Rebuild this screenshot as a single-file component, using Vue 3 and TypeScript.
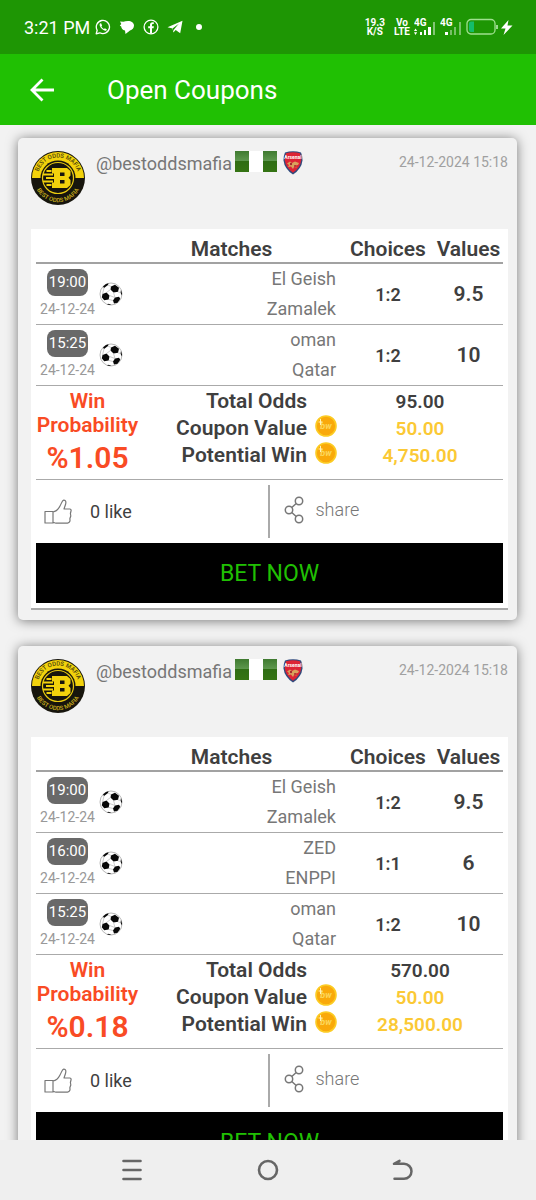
<script setup lang="ts">
interface Match {
  time: string
  date: string
  home: string
  away: string
  choice: string
  value: string
}

interface Coupon {
  id: number
  user: string
  createdAt: string
  matches: Match[]
  probability: string
  totalOdds: string
  couponValue: string
  potentialWin: string
  likes: number
}

const elGeish: Match = { time: '19:00', date: '24-12-24', home: 'El Geish', away: 'Zamalek', choice: '1:2', value: '9.5' }
const zed: Match = { time: '16:00', date: '24-12-24', home: 'ZED', away: 'ENPPI', choice: '1:1', value: '6' }
const oman: Match = { time: '15:25', date: '24-12-24', home: 'oman', away: 'Qatar', choice: '1:2', value: '10' }

const coupons: Coupon[] = [
  {
    id: 1,
    user: '@bestoddsmafia',
    createdAt: '24-12-2024 15:18',
    matches: [elGeish, oman],
    probability: '%1.05',
    totalOdds: '95.00',
    couponValue: '50.00',
    potentialWin: '4,750.00',
    likes: 0,
  },
  {
    id: 2,
    user: '@bestoddsmafia',
    createdAt: '24-12-2024 15:18',
    matches: [elGeish, zed, oman],
    probability: '%0.18',
    totalOdds: '570.00',
    couponValue: '50.00',
    potentialWin: '28,500.00',
    likes: 0,
  },
]
</script>

<template>
  <div class="screen">
    <div class="status">
      <span class="clock">3:21 PM</span>
      <div class="notices">
        <svg viewBox="0 0 16 16" width="16" height="16" aria-hidden="true">
          <path d="M1.2 14.8l1-3.5A6.6 6.6 0 1 1 4.8 13.800z" fill="none" stroke="#fff" stroke-width="1.3" stroke-linejoin="round" />
          <path d="M5.4 4.3c-.9.6-1 1.800-.4 2.900 1 2 2.500 3.500 4.400 4.300 1.200.4 2.200 0 2.500-1.100l-2-1.100-.9.8c-1.200-.5-2-1.300-2.600-2.500l.7-.9-.8-2.200z" fill="#fff" />
        </svg>
        <svg viewBox="0 0 16 16" width="16" height="16" aria-hidden="true">
          <path d="M1 2.500L4.500 2.800Q6 2 9 2c3.500 0 6 1.800 6 4.600s-1.700 4.200-4 4.900L6.500 15 6 11.600C3.500 11 2.300 9.500 2.200 7.600L.8 6.500 2.300 5z" fill="#fff" />
        </svg>
        <svg viewBox="0 0 16 16" width="16" height="16" aria-hidden="true">
          <circle cx="8" cy="8" r="6.900" fill="none" stroke="#fff" stroke-width="1.3" />
          <path d="M7 14.500V9.200H5.200V7.200H7V5.800c0-1.700 1-2.600 2.500-2.600h1.300V5H9.800c-.6 0-.8.3-.8.900v1.300h1.900l-.3 2H9v5.300z" fill="#fff" />
        </svg>
        <svg viewBox="0 0 16 16" width="16" height="16" aria-hidden="true">
          <path d="M.5 8.300L15.500 1.700l-2.300 12.600-4.500-3.200-2.300 2.400-.8-4z" fill="#fff" />
          <path d="M5.800 9.300l6-4.600-4.600 5.500-.6 2z" fill="#1e9604" />
        </svg>
        <svg viewBox="0 0 16 16" width="16" height="16" aria-hidden="true">
          <circle cx="8" cy="8" r="3" fill="#fff" />
        </svg>
      </div>
      <div class="system">
        <span class="stack rate"><span>19.3</span><span>K/S</span></span>
        <span class="stack"><span>Vo</span><span>LTE</span></span>
        <svg viewBox="0 0 22 18" width="22" height="18" aria-hidden="true">
          <text x="0" y="8" class="tiny">4G</text>
          <g fill="#fff">
            <path d="M1.500 10.500L3.200 13H0zM1.500 17L3.200 14.300H0z" />
            <rect x="6" y="14" width="2" height="3" />
            <rect x="10" y="12" width="2" height="5" />
            <rect x="14" y="9" width="3" height="8" />
            <rect x="19" y="4" width="2" height="13" opacity=".45" />
          </g>
        </svg>
        <svg viewBox="0 0 22 18" width="22" height="18" aria-hidden="true">
          <text x="0" y="8" class="tiny">4G</text>
          <g fill="#fff">
            <rect x="5" y="14" width="3" height="3" />
            <rect x="10" y="12" width="2" height="5" opacity=".4" />
            <rect x="14" y="9" width="2" height="8" opacity=".4" />
            <rect x="19" y="4" width="2" height="13" opacity=".4" />
          </g>
        </svg>
        <svg viewBox="0 0 48 18" width="48" height="18" aria-hidden="true">
          <rect x="1" y="1.500" width="28" height="14.500" rx="4" fill="none" stroke="#9fe08f" stroke-width="1.300" />
          <path d="M5 3.500h3v10.500H5a2 2 0 0 1-2-2V5.500a2 2 0 0 1 2-2z" fill="#14bd6b" />
          <path d="M31 7v4" stroke="#c8efc0" stroke-width="1.500" />
          <path d="M42.500 2L35 10.500h4.500L37.500 17 46.500 7.500h-5z" fill="#fff" />
        </svg>
      </div>
    </div>

    <header class="appbar">
      <button class="icon-button" type="button" aria-label="Back">
        <svg viewBox="0 0 26 26" width="26" height="26" aria-hidden="true">
          <path d="M25 13H3M13.500 2.500L3 13l10.500 10.500" fill="none" stroke="#fff" stroke-width="2.800" />
        </svg>
      </button>
      <h1>Open Coupons</h1>
    </header>

    <main class="feed">
      <article v-for="coupon in coupons" :key="coupon.id" class="card">
        <header class="card-head">
          <svg class="avatar" viewBox="0 0 54 54" width="54" height="54" aria-hidden="true">
            <defs>
              <path :id="`arc-top-${coupon.id}`" d="M6.500 27a20.500 20.500 0 0 1 41 0" />
              <path :id="`arc-bottom-${coupon.id}`" d="M2.800 27a24.200 24.200 0 0 0 48.400 0" />
            </defs>
            <circle cx="27" cy="27" r="27" fill="#17150d" />
            <path d="M1 27a26 26 0 0 1 52 0z" fill="#f2d20c" />
            <circle cx="27" cy="27" r="17.500" fill="#17150d" />
            <circle cx="27" cy="27" r="15.500" fill="none" stroke="#e9ca10" stroke-width="1.200" />
            <text class="ring dark" text-anchor="middle"><textPath :href="`#arc-top-${coupon.id}`" startOffset="50%">BEST ODDS MAFIA</textPath></text>
            <text class="ring gold" text-anchor="middle"><textPath :href="`#arc-bottom-${coupon.id}`" startOffset="50%">BEST ODDS MAFIA</textPath></text>
            <path fill-rule="evenodd" d="M21 17h15l3.500 3v4.500l-2 2.300 2 2.300V34l-3.500 3H21v-5.500h2v-9h-2zM29 21.500v3.500h4.500v-3.500zM29 29v3.500h4.500V29z" fill="#f2d20c" />
            <path d="M15.500 20h5M12 23.500h10M15 27h8M12 30.500h10M15.500 34h5" stroke="#f2d20c" stroke-width="1.800" />
          </svg>
          <span class="user">{{ coupon.user }}</span>
          <svg class="flag" viewBox="0 0 42 21" width="42" height="21" role="img" aria-label="Nigeria">
            <defs>
              <linearGradient :id="`flag-${coupon.id}`" x1="0" y1="0" x2="0" y2="1">
                <stop offset="0" stop-color="#3f7a30" />
                <stop offset=".48" stop-color="#5f984f" />
                <stop offset=".5" stop-color="#2f6d14" />
                <stop offset="1" stop-color="#357414" />
              </linearGradient>
            </defs>
            <rect width="42" height="21" fill="#fff" />
            <rect width="14" height="21" :fill="`url(#flag-${coupon.id})`" />
            <rect x="28" width="14" height="21" :fill="`url(#flag-${coupon.id})`" />
          </svg>
          <svg class="crest" viewBox="0 0 20 24" width="20" height="24" role="img" aria-label="Arsenal">
            <path d="M2 1.500Q10-.8 18 1.500q1.600 3.500 1.500 8Q18.500 18 10 23.500 1.500 18 .5 9.500.4 5 2 1.500z" fill="#2f4a7d" />
            <path d="M3 2.300q7-1.900 14 0 1.300 3.200 1.200 7Q17.400 16.600 10 21.800 2.600 16.600 1.800 9.300 1.700 5.500 3 2.300z" fill="#dd2435" />
            <text x="10" y="7.500" text-anchor="middle" class="crest-name">Arsenal</text>
            <path d="M4 12.500l3-2 2 1.500 3-1.500 4 1.500-1 2-3 .5 2 2-3-.5-1 2-2-2.500-3 .5 1-2z" fill="#d9a25c" />
            <circle cx="8" cy="13" r="1.200" fill="#a52b2f" />
            <circle cx="12" cy="15" r="1" fill="#a52b2f" />
          </svg>
          <time class="stamp">{{ coupon.createdAt }}</time>
        </header>

        <div class="panel">
          <table class="matches">
            <colgroup>
              <col class="col-time" />
              <col class="col-sport" />
              <col />
              <col class="col-choice" />
              <col class="col-value" />
            </colgroup>
            <thead>
              <tr>
                <td></td>
                <td></td>
                <th scope="col">Matches</th>
                <th scope="col" class="choice">Choices</th>
                <th scope="col">Values</th>
              </tr>
            </thead>
            <tbody>
              <tr v-for="match in coupon.matches" :key="match.time">
                <td>
                  <div class="when">
                    <span class="time">{{ match.time }}</span>
                    <span class="date">{{ match.date }}</span>
                  </div>
                </td>
                <td>
                  <svg class="ball" viewBox="0 0 24 24" width="24" height="24" role="img" aria-label="Football">
                    <circle cx="12" cy="12" r="11" fill="#fff" stroke="#999" stroke-width=".7" />
                    <path d="M12 4.500l4-1.700 4 3-1 4-4.500.6-3-2.900zM3.500 12l4-1.500 3 3-.8 3.900-4.500.8-2.400-3zM14 18.500l2-3 4-.8 1.300 2-2.800 4-3.500.8zM4 4.500Q6.500 1.800 9.500 1.200L9 3 5 6zM22 8l1 3.500-.3 2-1.200-3zM8 22.500l1.500-.8 3 1.200-1.500.2z" fill="#080808" />
                    <path d="M9 3l3 1.500M11.500 7.500l-4 3M14.500 10.400l1.500 5.100M10.500 13.500L16 15.500M9.700 17.400L14 18.500M19 9.800l2.500.7M5 6L3.500 12" fill="none" stroke="#aaa" stroke-width=".6" />
                  </svg>
                </td>
                <td class="teams"><span>{{ match.home }}</span><span>{{ match.away }}</span></td>
                <td class="choice">{{ match.choice }}</td>
                <td class="value">{{ match.value }}</td>
              </tr>
            </tbody>
          </table>

          <section class="summary">
            <div class="probability">
              <span>Win</span>
              <span>Probability</span>
              <strong>{{ coupon.probability }}</strong>
            </div>
            <dl class="totals">
              <dt>Total Odds</dt>
              <dd>{{ coupon.totalOdds }}</dd>
              <template v-for="row in [['Coupon Value', coupon.couponValue], ['Potential Win', coupon.potentialWin]]" :key="row[0]">
                <dt>
                  {{ row[0] }}
                  <svg class="coin" viewBox="0 0 22 22" width="22" height="22" aria-hidden="true">
                    <circle cx="11" cy="11" r="10" fill="#f9a90b" stroke="#fccb22" stroke-width="1.600" />
                    <text x="11" y="14" text-anchor="middle" class="coin-mark">bw</text>
                    <path d="M5.500 4v6M3.500 7h4" stroke="#fff3b8" stroke-width="1" />
                  </svg>
                </dt>
                <dd class="gold-value">{{ row[1] }}</dd>
              </template>
            </dl>
          </section>

          <div class="actions">
            <button class="like" type="button">
              <svg viewBox="0 0 28 26" width="28" height="26" aria-hidden="true">
                <path d="M1 12.500h8V24H1zM9 13c3.500-.5 5.500-3 7-6 1.500-2.500 2-5.500 3.700-5.900 2.300-.2 2.500 2.200 1.800 4.400L20 10h6q1.500.4 1 2l-.6 2.500.4 2.500-.9 2.500.1 2.500q-.8 2-2.500 2.200H12l-3-1" fill="none" stroke="#777" stroke-width="1.200" stroke-linejoin="round" />
              </svg>
              <span>{{ coupon.likes }} like</span>
            </button>
            <button class="share" type="button">
              <svg viewBox="0 0 20 28" width="20" height="28" aria-hidden="true">
                <g fill="none" stroke="#777" stroke-width="1.500">
                  <circle cx="15" cy="5" r="3.700" />
                  <circle cx="5" cy="14" r="3.700" />
                  <circle cx="15" cy="23" r="3.700" />
                  <path d="M12.200 7.500L7.800 11.500M7.800 16.500l4.400 4" />
                </g>
              </svg>
              <span>share</span>
            </button>
          </div>

          <button class="bet" type="button">BET NOW</button>
        </div>
      </article>
    </main>

    <nav class="sysnav">
      <button class="icon-button" type="button" aria-label="Recent apps">
        <svg viewBox="0 0 24 24" width="24" height="24" aria-hidden="true">
          <path d="M3.500 3h17M3.500 12h17M3.500 21h17" stroke="#666" stroke-width="2.600" stroke-linecap="round" />
        </svg>
      </button>
      <button class="icon-button" type="button" aria-label="Home">
        <svg viewBox="0 0 24 24" width="24" height="24" aria-hidden="true">
          <circle cx="12" cy="12" r="9" fill="none" stroke="#666" stroke-width="2.600" />
        </svg>
      </button>
      <button class="icon-button" type="button" aria-label="Back">
        <svg viewBox="0 0 24 24" width="24" height="24" aria-hidden="true">
          <path d="M7.500 2.800L2 5.800H12a7.500 7.500 0 0 1 0 15H2.500" fill="none" stroke="#666" stroke-width="2.500" stroke-linecap="round" stroke-linejoin="round" />
        </svg>
      </button>
    </nav>
  </div>
</template>

<style>
body {
  margin: 0;
}
</style>

<style scoped>
.screen {
  display: flex;
  flex-direction: column;
  height: 100vh;
  overflow: hidden;
  background: #f2f2f2;
  color: #3f3f3f;
  font-family: Roboto, "Liberation Sans", sans-serif;
}
.screen *,
.screen {
  box-sizing: border-box;
}
svg {
  display: block;
  flex: none;
}
button {
  margin: 0;
  padding: 0;
  border: 0;
  background: none;
  color: inherit;
  font: inherit;
}
.status {
  display: flex;
  flex: none;
  align-items: center;
  height: 54px;
  padding: 0 22px 0 24px;
  background: #1e9604;
  color: #fff;
}
.clock {
  font-size: 18px;
}
.notices {
  display: flex;
  gap: 8px;
  padding-left: 5px;
}
.system {
  display: flex;
  align-items: center;
  gap: 4px;
  margin-left: auto;
}
.stack {
  display: flex;
  flex-direction: column;
  align-items: center;
  font-size: 10px;
  font-weight: 700;
  line-height: 9px;
}
.rate {
  margin-right: 5px;
}
.tiny {
  fill: #fff;
  font-size: 10px;
  font-weight: 700;
}
.appbar {
  display: flex;
  flex: none;
  align-items: center;
  gap: 52px;
  height: 71px;
  padding: 0 29px;
  background: #20c003;
  color: #fff;
}
.appbar h1 {
  margin: 0;
  font-size: 26px;
  font-weight: 400;
}
.feed {
  display: flex;
  flex: 1;
  flex-direction: column;
  gap: 26px;
  min-height: 0;
  padding: 13px 19px 26px 18px;
  overflow: hidden;
}
.card {
  flex: none;
  padding: 0 9px 10px 13px;
  border-radius: 5px;
  background: #f2f2f2;
  box-shadow: 0 1px 12px rgba(0, 0, 0, 0.5);
}
.card-head {
  display: flex;
  align-items: flex-start;
  height: 91px;
  padding-top: 13px;
}
.user {
  margin-left: 11px;
  color: #777;
  font-size: 18px;
  line-height: 25px;
}
.flag {
  margin-left: 3px;
}
.crest {
  margin-left: 6px;
}
.stamp {
  margin-left: auto;
  color: #a0a0a0;
  font-size: 14px;
  line-height: 22px;
}
.ring {
  font-size: 6px;
  font-weight: 500;
}
.dark {
  fill: #4d420c;
}
.gold {
  fill: #c9ad1c;
}
.crest-name {
  fill: #fff;
  font-size: 5px;
  font-weight: 700;
}
.panel {
  padding: 0 5px 5px;
  border-bottom: 2px solid #aaa;
  background: #fff;
}
.matches {
  width: 100%;
  table-layout: fixed;
  border-collapse: collapse;
}
.col-time {
  width: 63px;
}
.col-sport {
  width: 28px;
}
.col-choice {
  width: 98px;
}
.col-value {
  width: 69px;
}
.matches td,
.matches th {
  padding: 0;
  border-bottom: 1px solid #aaa;
}
.matches thead td,
.matches thead th {
  height: 34px;
  padding-top: 6px;
  border-bottom: 2px solid #a2a2a2;
  font-size: 21px;
  font-weight: 600;
  line-height: 24px;
}
.matches tbody td {
  height: 61px;
}
.matches th,
.choice,
.value {
  text-align: center;
}
.matches .choice {
  padding-left: 6px;
}
.when {
  display: flex;
  flex-direction: column;
  align-items: center;
  padding-top: 4px;
}
.time {
  padding: 0 2px;
  border-radius: 8px;
  background: #696969;
  color: #fff;
  font-size: 15px;
  line-height: 27px;
}
.date {
  color: #999;
  font-size: 14px;
  line-height: 27px;
}
.teams {
  color: #777;
  font-size: 18px;
  line-height: 30px;
  text-align: right;
}
.teams span {
  display: block;
}
td.choice {
  font-size: 18px;
  font-weight: 600;
}
.value {
  font-size: 21px;
  font-weight: 600;
}
.summary {
  display: flex;
  min-height: 94px;
  border-bottom: 1px solid #aaa;
}
.probability {
  display: flex;
  flex: none;
  flex-direction: column;
  align-items: center;
  width: 103px;
  padding-top: 3px;
  color: #f94b24;
  font-size: 21px;
  font-weight: 600;
  line-height: 24px;
}
.probability strong {
  font-size: 30px;
  font-weight: 600;
  line-height: 42px;
}
.totals {
  display: grid;
  flex: 1;
  grid-template-columns: 198px 1fr;
  grid-auto-rows: 27px;
  margin: 0;
  padding-top: 2px;
  font-weight: 600;
  line-height: 27px;
}
.totals dt {
  display: flex;
  justify-content: flex-end;
  gap: 8px;
  font-size: 21px;
}
.totals dt:first-child {
  padding-right: 30px;
}
.totals dd {
  width: 166px;
  margin: 0;
  font-size: 19px;
  text-align: center;
}
.totals .gold-value {
  color: #fbc935;
}
.coin-mark {
  fill: #fcd75a;
  font-size: 9px;
  font-style: italic;
  font-weight: 700;
}
.actions {
  display: grid;
  grid-template-columns: 1fr 1fr;
  padding: 5px 0;
}
.actions button {
  display: flex;
  align-items: center;
  height: 53px;
  font-size: 18px;
}
.actions .like {
  gap: 18px;
  padding-left: 8px;
  border-right: 2px solid #aaa;
}
.actions .share {
  gap: 12px;
  padding: 0 0 4px 14px;
  color: #777;
  font-weight: 300;
}
.bet {
  display: block;
  width: 100%;
  height: 60px;
  background: #000;
  color: #20c003;
  font-size: 23px;
}
.sysnav {
  display: grid;
  flex: none;
  grid-template-columns: repeat(3, 1fr);
  align-items: center;
  justify-items: center;
  height: 60px;
  padding: 0 12%;
  background: #efefef;
}
</style>
